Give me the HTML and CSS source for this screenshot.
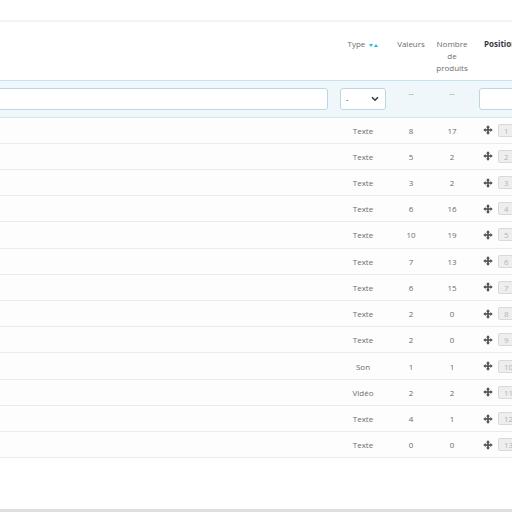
FILE: index.html
```html
<!DOCTYPE html>
<html lang="fr">
<head>
<meta charset="utf-8">
<title>Caractéristiques</title>
<link rel="stylesheet" href="styles.css">
</head>
<body>
<div class="panel">
  <div class="top"></div>
  <table class="grid">
    <colgroup>
      <col class="c-name"><col class="c-type"><col class="c-val"><col class="c-nb"><col class="c-pos">
    </colgroup>
    <thead>
      <tr class="head">
        <th></th>
        <th class="center">Type <span class="sort"><i class="dn"></i><i class="up"></i></span></th>
        <th class="center">Valeurs</th>
        <th class="center">Nombre<br>de<br>produits</th>
        <th class="pos-h">Position</th>
      </tr>
      <tr class="filter">
        <td><input class="f-input wide" type="text"></td>
        <td class="center"><div class="f-select"><span>-</span><svg width="8" height="6" viewBox="0 0 8 6"><path d="M1 1.2 L4 4.2 L7 1.2" fill="none" stroke="#363a41" stroke-width="1.6"/></svg></div></td>
        <td class="center top">--</td>
        <td class="center top">--</td>
        <td><input class="f-input pos-in" type="text"></td>
      </tr>
    </thead>
    <tbody id="rows"></tbody>
  </table>
</div>
<script src="app.js"></script>
</body>
</html>
```
FILE: app.js
```js
var data = [
  ["Texte",8,17],["Texte",5,2],["Texte",3,2],["Texte",6,16],["Texte",10,19],
  ["Texte",7,13],["Texte",6,15],["Texte",2,0],["Texte",2,0],["Son",1,1],
  ["Vidéo",2,2],["Texte",4,1],["Texte",0,0]
];
var icon = '<svg class="move" width="10" height="10" viewBox="0 0 10 10"><path d="M5 0.3 L7 2.6 H5.8 V4.2 H7.4 V3 L9.7 5 L7.4 7 V5.8 H5.8 V7.4 H7 L5 9.7 L3 7.4 H4.2 V5.8 H2.6 V7 L0.3 5 L2.6 3 V4.2 H4.2 V2.6 H3 Z" fill="#4a4a4a"/></svg>';
var tb = document.getElementById("rows");
data.forEach(function (r, i) {
  var tr = document.createElement("tr");
  tr.className = "row";
  tr.innerHTML = '<td></td><td class="center">' + r[0] + '</td><td class="center">' + r[1] +
    '</td><td class="center">' + r[2] + '</td><td class="pos"><span class="drag">' + icon +
    '<span class="badge">' + (i + 1) + '</span></span></td>';
  tb.appendChild(tr);
});
```
FILE: styles.css
```css
html, body {
  margin: 0;
  padding: 0;
  background: #ffffff;
  overflow: hidden;
}
body {
  width: 512px;
  height: 512px;
  font-family: "Open Sans", "Noto Sans", sans-serif;
  font-size: 8px;
  color: #6c6c6c;
}
.panel {
  width: 512px;
  height: 509px;
  border-bottom: 3px solid #dedede;
  overflow: hidden;
  background: #fff;
}
.top {
  height: 20px;
  border-bottom: 2px solid #f3f3f3;
}
.grid {
  border-collapse: collapse;
  width: 560px;
  table-layout: fixed;
}
.c-name { width: 334px; }
.c-type { width: 58px; }
.c-val { width: 38px; }
.c-nb { width: 44px; }
.c-pos { width: 86px; }
.grid th, .grid td {
  padding: 0 4px;
  font-weight: normal;
}
.center { text-align: center; }
.head th {
  height: 58px;
  box-sizing: border-box;
  vertical-align: top;
  padding-top: 16px;
  line-height: 12px;
  color: #6c6c6c;
  text-align: center;
}
.head th.pos-h {
  text-align: left;
  padding-left: 10px;
  font-weight: bold;
  color: #363a41;
}
.sort {
  display: inline-block;
  vertical-align: middle;
  margin-left: 1px;
}
.sort i {
  display: inline-block;
  width: 0;
  height: 0;
  border-left: 2.5px solid transparent;
  border-right: 2.5px solid transparent;
  vertical-align: middle;
  margin: 0 0.5px;
}
.sort .dn { border-top: 3px solid #25b9d7; }
.sort .up { border-bottom: 3px solid #25b9d7; }
.filter td {
  background: #eff7fb;
  border-top: 1px solid #c6e2ee;
  border-bottom: 1px solid #d2e8f1;
  height: 37px;
  box-sizing: border-box;
  vertical-align: middle;
}
.filter td.top {
  vertical-align: top;
  padding-top: 6px;
  color: #8a8a8a;
}
.f-input {
  display: block;
  box-sizing: border-box;
  height: 22px;
  border: 1px solid #bbd7e3;
  border-radius: 3px;
  background: #ffffff;
  margin: 0;
  padding: 0;
}
.f-input.wide {
  width: 334px;
  margin-left: -10px;
}
.f-input.pos-in {
  width: 90px;
  margin-left: 1px;
}
.f-select {
  box-sizing: border-box;
  height: 22px;
  width: 46px;
  margin: 0 auto;
  border: 1px solid #bbd7e3;
  border-radius: 3px;
  background: #ffffff;
  display: flex;
  align-items: center;
  justify-content: space-between;
  padding: 0 6px 0 5px;
  color: #363a41;
}
.row td {
  height: 26.23px;
  box-sizing: border-box;
  border-bottom: 1px solid #ebebeb;
  background: #fdfdfd;
  vertical-align: middle;
  padding-top: 0;
  padding-bottom: 0;
  color: #6c6c6c;
}
.drag {
  display: flex;
  align-items: center;
  gap: 5px;
  padding-left: 5px;
}
.move { display: block; flex: none; }
.badge {
  display: inline-block;
  box-sizing: border-box;
  height: 13px;
  width: 40px;
  line-height: 11px;
  border: 1px solid #d9d9d9;
  border-radius: 2px;
  background: #eeeeee;
  color: #b5b5b5;
  padding-left: 5px;
  font-size: 8px;
}
```
